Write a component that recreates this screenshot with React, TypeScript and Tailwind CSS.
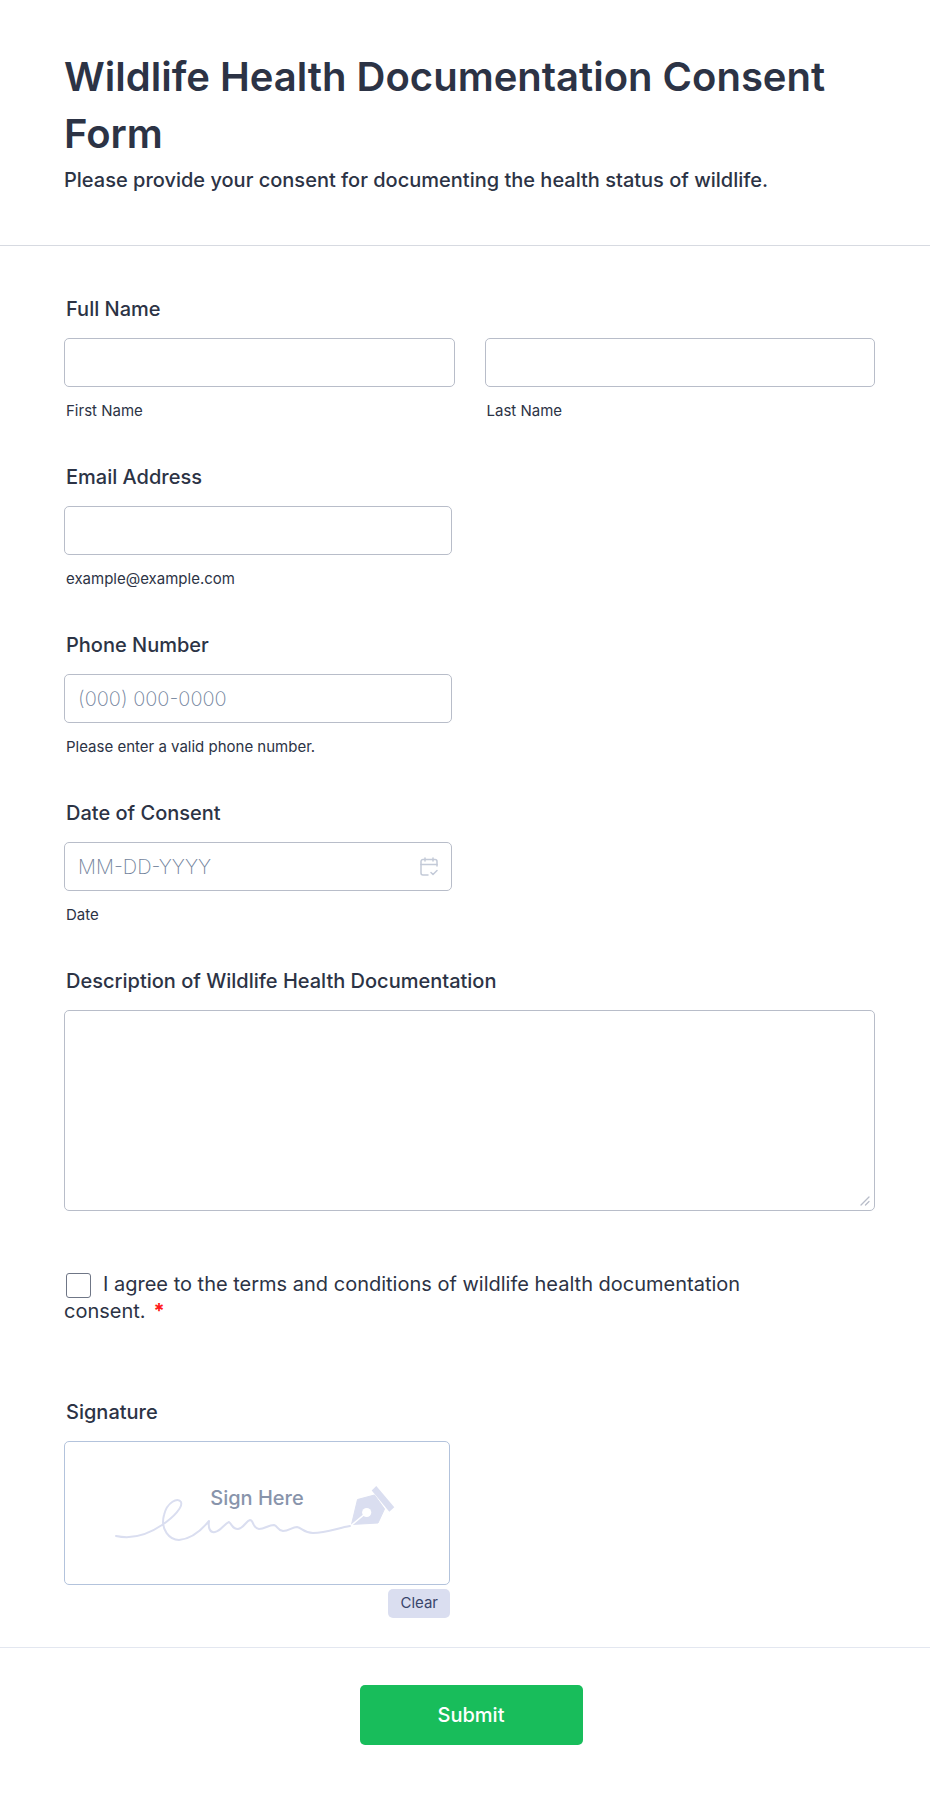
import { useState } from "react";

const inputStyle =
  "block w-full h-[49px] px-[13px] text-xl text-[#2c3345] bg-white border border-[#b8bdc9] rounded-[5px] placeholder:font-extralight placeholder:text-[#71829b] placeholder:opacity-100 focus:outline-none focus:border-blue-500";

const labelStyle = "block ml-[2px] mb-[17px] text-xl leading-6 font-medium";

const hintStyle = "block ml-[2px] mt-[14px] text-[15px] leading-5";

const CalendarIcon = () => (
  <svg
    viewBox="0 0 18 19"
    fill="none"
    stroke="#c3cad8"
    strokeWidth="1.5"
    strokeLinecap="round"
    strokeLinejoin="round"
    className="w-[18px] h-[19px]"
  >
    <path d="M17 9V4.5A2 2 0 0 0 15 2.5H3a2 2 0 0 0-2 2V16a2 2 0 0 0 2 2h5" />
    <path d="M1 7.5h16M5 1v3M13 1v3" />
    <path d="M11 15.5l2 2 4-4" />
  </svg>
);

const ResizeGrip = () => (
  <svg
    viewBox="0 0 10 10"
    stroke="#b8bdc9"
    strokeWidth="1.3"
    strokeLinecap="round"
    className="absolute right-[5px] bottom-[5px] w-[10px] h-[10px] pointer-events-none"
  >
    <path d="M1 9L9 1M5.5 9L9 5.5" />
  </svg>
);

const SignatureArt = () => (
  <svg viewBox="1 1 384 142" fill="none" className="absolute inset-0 w-full h-full">
    <path
      d="M52 95C66 98 82 95 98 84C110 76 119 66 117 61C114 56 103 61 100 74C96 89 106 99 115 99C127 98 136 91 145 80C144 87 146 92 151 91C157 90 160 83 165 81C168 83 168 88 174 88C180 87 182 80 186 79C190 79 188 87 195 88C201 88 204 84 210 84C214 85 213 89 219 90C225 90 228 86 233 86C238 87 240 92 249 92C262 92 274 87 286 85"
      stroke="#dadef0"
      strokeWidth="2"
      strokeLinecap="round"
      strokeLinejoin="round"
    />
    <path
      d="M287.5 83.5L293.5 58.5L310.5 54L320.5 68L314 82Z"
      fill="#dadef0"
      stroke="#dadef0"
      strokeLinejoin="round"
    />
    <path d="M287 84.5L302 72" stroke="#fff" strokeWidth="1.6" />
    <circle cx="302.7" cy="71.5" r="4.6" fill="#fff" />
    <path d="M307.7 49.5L312.3 45L330.3 66.3L325.3 70.8Z" fill="#dadef0" />
  </svg>
);

const App = () => {
  const [agreed, setAgreed] = useState(false);

  const handleSubmit = (e: React.FormEvent<HTMLFormElement>) => {
    e.preventDefault();
  };

  return (
    <main className="min-h-screen bg-white text-[#2c3345] font-['Inter',sans-serif]">
      <form onSubmit={handleSubmit}>
        <header className="pt-12 pb-[53px] pl-16 pr-[55px] border-b border-[#d7dae1]">
          <h1 className="text-[40px] leading-[57px] font-semibold">
            Wildlife Health Documentation Consent Form
          </h1>
          <p className="mt-[6px] text-xl leading-6 font-medium">
            Please provide your consent for documenting the health status of
            wildlife.
          </p>
        </header>

        <div className="pt-[51px] pb-[29px] pl-16 pr-[55px] flex flex-col gap-11 border-b border-[#e3e7f0]">
          <fieldset>
            <legend className={labelStyle}>Full Name</legend>
            <div className="grid grid-cols-2 gap-[30px]">
              <div>
                <input type="text" id="first" className={inputStyle} />
                <label htmlFor="first" className={hintStyle}>
                  First Name
                </label>
              </div>
              <div>
                <input type="text" id="last" className={inputStyle} />
                <label htmlFor="last" className={hintStyle}>
                  Last Name
                </label>
              </div>
            </div>
          </fieldset>

          <div className="max-w-[388px]">
            <label htmlFor="email" className={labelStyle}>
              Email Address
            </label>
            <input type="email" id="email" className={inputStyle} />
            <span className={hintStyle}>example@example.com</span>
          </div>

          <div className="max-w-[388px]">
            <label htmlFor="phone" className={labelStyle}>
              Phone Number
            </label>
            <input
              type="tel"
              id="phone"
              placeholder="(000) 000-0000"
              className={inputStyle}
            />
            <span className={hintStyle}>Please enter a valid phone number.</span>
          </div>

          <div className="max-w-[388px]">
            <label htmlFor="date" className={labelStyle}>
              Date of Consent
            </label>
            <div className="relative">
              <input
                type="text"
                id="date"
                placeholder="MM-DD-YYYY"
                className={inputStyle}
              />
              <button
                type="button"
                aria-label="Choose date"
                className="absolute right-[14px] inset-y-0 flex items-center"
              >
                <CalendarIcon />
              </button>
            </div>
            <span className={hintStyle}>Date</span>
          </div>

          <div>
            <label htmlFor="description" className={labelStyle}>
              Description of Wildlife Health Documentation
            </label>
            <div className="relative">
              <textarea
                id="description"
                className="block w-full h-[201px] p-3 text-xl border border-[#b8bdc9] rounded-[5px] resize-y focus:outline-none focus:border-blue-500 [&::-webkit-resizer]:hidden"
              />
              <ResizeGrip />
            </div>
          </div>

          <div className="mt-4 mb-[31px] max-w-[690px] text-xl leading-[27px]">
            <input
              type="checkbox"
              id="agree"
              checked={agreed}
              onChange={(e) => setAgreed(e.target.checked)}
              required
              className="appearance-none w-[25px] h-[25px] ml-[2px] mr-3 align-middle bg-white border border-[#6f7686] rounded-[3px] checked:bg-blue-500"
            />
            <label htmlFor="agree">
              I agree to the terms and conditions of wildlife health
              documentation consent.
            </label>
            <span className="ml-2 font-bold text-[#ff1a1a]">*</span>
          </div>

          <div className="max-w-[386px]">
            <h2 className={labelStyle}>Signature</h2>
            <div className="relative h-36 border border-[#b3c3dc] rounded-[5px]">
              <SignatureArt />
              <p className="relative pt-11 text-center text-xl leading-6 font-medium text-[#8894ab]">
                Sign Here
              </p>
            </div>
            <div className="mt-1 flex justify-end">
              <button
                type="button"
                className="h-[29px] px-3 text-[15px] text-[#39456b] bg-[#dadef0] rounded-[5px]"
              >
                Clear
              </button>
            </div>
          </div>
        </div>

        <div className="pt-[37px] pb-12 pl-16 pr-[52px] flex justify-center">
          <button
            type="submit"
            className="w-[223px] h-[60px] text-xl font-medium text-white bg-[#18bd5b] rounded-[5px]"
          >
            Submit
          </button>
        </div>
      </form>
    </main>
  );
};

export default App;
